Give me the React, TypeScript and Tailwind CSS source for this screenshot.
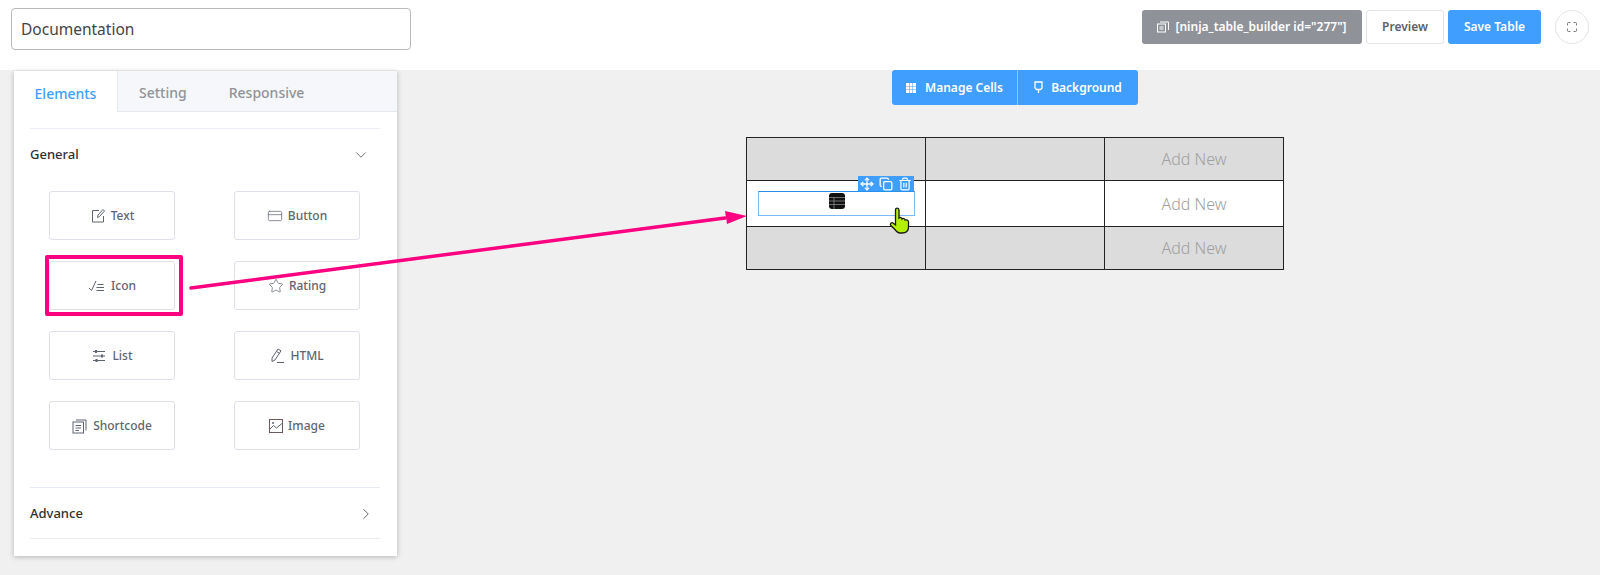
import type { ReactNode } from "react";
import { ChevronDown, ChevronRight, Copy, Move, Star, Trash2, CreditCard, Maximize } from "lucide-react";

function Glyph({ children, w = 16, h = 16 }: { children: ReactNode; w?: number; h?: number }) {
  return (
    <svg width={w} height={h} viewBox={`0 0 ${w} ${h}`} fill="none" stroke="currentColor" strokeWidth="1">
      {children}
    </svg>
  );
}

const elements: { label: string; icon: ReactNode; marked?: boolean }[] = [
  {
    label: "Text",
    icon: (
      <Glyph>
        <path d="M9 2.500H2.500v11.500h11V8" />
        <path d="M7.500 9.500l.5-2.500 5-5.500 1.500 1.500-5 5.500z" />
      </Glyph>
    ),
  },
  { label: "Button", icon: <CreditCard size={16} strokeWidth={1.1} /> },
  {
    label: "Icon",
    icon: (
      <Glyph w={18}>
        <path d="M1 10l2.500 2.500L8 3" />
        <path d="M9.500 6.500h6M8.500 9.500h7.500M8.500 12.500h7.500" />
      </Glyph>
    ),
    marked: true,
  },
  { label: "Rating", icon: <Star size={16} strokeWidth={1.1} /> },
  {
    label: "List",
    icon: (
      <Glyph>
        <path d="M2 3.500h12M2 8h12M2 12.500h12" />
        <path d="M5 2v3M11 6.500v3M5.500 11v3" strokeWidth="2" />
      </Glyph>
    ),
  },
  {
    label: "HTML",
    icon: (
      <Glyph w={15} h={17}>
        <path d="M2 11l6-9 3 1.800-6 9.200-3 1.500z" />
        <path d="M6.500 4.500l3 1.800M7 15.500h7" />
      </Glyph>
    ),
  },
  {
    label: "Shortcode",
    icon: (
      <Glyph>
        <rect x="1" y="4" width="10.500" height="11" />
        <path d="M4 2h10v10.500M3.500 7.500h5.500M3.500 10h5.500M3.500 12.500h3.500" />
      </Glyph>
    ),
  },
  {
    label: "Image",
    icon: (
      <Glyph w={14} h={14}>
        <rect x="0.500" y="0.500" width="13" height="13" stroke="#6b5a5a" />
        <path d="M.5 10.500l4-4 3 2.500 6-5" />
        <circle cx="4" cy="4" r="1" fill="currentColor" stroke="none" />
      </Glyph>
    ),
  },
];

function ElementButton({ label, icon, marked }: { label: string; icon: ReactNode; marked?: boolean }) {
  return (
    <div className="relative flex h-[49px] w-[126px] items-center justify-center gap-[5px] rounded-[3px] border border-[#dfe1ea] bg-white text-[12px] font-medium text-[#5f6570]">
      {icon}
      <span>{label}</span>
      {marked && <div className="absolute -left-[5px] -top-[7px] h-[61px] w-[138px] rounded-[2px] border-4 border-[#fb0080]" />}
    </div>
  );
}

function Cell({ shaded, text, children }: { shaded?: boolean; text?: string; children?: ReactNode }) {
  return (
    <td className={`relative border border-[#222] p-0 text-center text-[16px] font-light text-[#a0a0a0] ${shaded ? "bg-[#dcdcdc]" : "bg-white"}`}>
      {text}
      {children}
    </td>
  );
}

export default function App() {
  return (
    <div className="relative h-[575px] w-[1600px] overflow-hidden bg-[#f0f0f0] font-['Noto_Sans',sans-serif]">
      <header className="flex h-[70px] items-start bg-white pl-[11px] pr-[11px] pt-[8px]">
        <div className="flex h-[42px] w-[400px] items-center rounded-[4px] border border-[#b9b9b9] pl-[9px] pt-[2px] text-[15.5px] text-[#444]">
          Documentation
        </div>
        <div className="ml-auto mt-[2px] flex items-center text-[12px] font-semibold">
          <div className="flex h-[34px] w-[220px] items-center justify-center gap-[6px] rounded-[3px] bg-[#8f9298] text-white">
            <Glyph w={12} h={12}>
              <rect x="0.500" y="3" width="8" height="8" />
              <path d="M3 1h8.500v8M2.500 6h4M2.500 8h4" />
            </Glyph>
            <span>[ninja_table_builder id="277"]</span>
          </div>
          <div className="ml-[4px] flex h-[34px] w-[78px] items-center justify-center rounded-[3px] border border-[#e2e4ea] bg-white text-[#606266]">Preview</div>
          <div className="ml-[4px] flex h-[34px] w-[93px] items-center justify-center rounded-[3px] bg-[#409eff] text-white">Save Table</div>
          <div className="ml-[14px] flex h-[34px] w-[34px] items-center justify-center rounded-full border border-[#e2e4ea] text-[#777]">
            <Maximize size={12} />
          </div>
        </div>
      </header>

      <main className="flex items-start">
        <aside className="ml-[14px] mt-px h-[485px] w-[383px] bg-white shadow-[0_1px_5px_rgba(0,0,0,0.25)]">
          <div className="flex h-[41px] border-b border-[#e4e7ed] bg-[#f5f7fa] pt-0 text-[14px] font-medium text-[#909399]">
            <div className="-mb-px flex w-[104px] items-center justify-center border-r border-[#e4e7ed] bg-white pt-[3px] text-[#409eff]">Elements</div>
            <div className="flex items-center pl-[21px] pt-[3px]">Setting</div>
            <div className="flex items-center pl-[42px] pt-[3px]">Responsive</div>
          </div>
          <div className="ml-[16px] mr-[17px] mt-[16px] border-t border-[#ebeef5]">
            <div className="flex h-[50px] items-center justify-between pr-[10px] pt-[2px] text-[13px] font-medium text-[#303133]">
              General
              <ChevronDown size={18} strokeWidth={0.9} />
            </div>
            <div className="ml-[19px] mt-[12px] grid w-[311px] grid-cols-2 gap-x-[59px] gap-y-[21px]">
              {elements.map((el) => (
                <ElementButton key={el.label} {...el} />
              ))}
            </div>
            <div className="mt-[37px] flex h-[52px] items-center justify-between border-y border-[#e6eaf3] pr-[5px] pt-[2px] text-[13px] font-medium text-[#303133]">
              Advance
              <ChevronRight size={18} strokeWidth={1} />
            </div>
          </div>
        </aside>

        <section className="ml-[349px] flex w-[538px] flex-col items-center">
          <div className="flex h-[35px] w-[246px] rounded-[3px] bg-[#409eff] text-[12px] font-semibold text-white">
            <div className="flex w-[126px] items-center justify-center gap-[9px] border-r border-[#8cc5ff]">
              <svg width="10" height="10" viewBox="0 0 10 10" fill="currentColor">
                <path d="M0 0h3v3H0zM3.500 0h3v3h-3zM7 0h3v3H7zM0 3.500h3v3H0zM3.500 3.500h3v3h-3zM7 3.500h3v3H7zM0 7h3v3H0zM3.500 7h3v3h-3zM7 7h3v3H7z" />
              </svg>
              Manage Cells
            </div>
            <div className="flex flex-1 items-center justify-center gap-[8px]">
              <svg width="9" height="13" viewBox="0 0 9 13" fill="none" stroke="currentColor" strokeWidth="1.300">
                <path d="M1 1h7v6l-1.500 1.500h-4L1 7z" />
                <path d="M4.500 9v3" />
              </svg>
              Background
            </div>
          </div>
          <table className="mt-[32px] h-[132px] w-[538px] table-fixed border-collapse">
            <tbody>
              <tr className="h-[43px]">
                <Cell shaded />
                <Cell shaded />
                <Cell shaded text="Add New" />
              </tr>
              <tr className="h-[46px]">
                <Cell>
                  <div className="ml-[11px] flex h-[25px] w-[157px] justify-center border border-[#7db8f7] border-t-[#2a8fe8] pt-px text-black">
                    <svg width="16" height="16" viewBox="0 0 16 16">
                      <rect width="16" height="16" rx="3" fill="#111" />
                      <path d="M0 4.500h16M0 8h16M0 11.500h16M5 4v12" stroke="#888" strokeWidth="0.8" />
                    </svg>
                  </div>
                  <div className="absolute left-[111px] top-[-5px] flex h-[15px] w-[56px] items-center justify-around bg-[#409eff] text-white">
                    <Move size={14} strokeWidth={2.200} />
                    <Copy size={14} strokeWidth={2.200} />
                    <Trash2 size={14} strokeWidth={2} />
                  </div>
                </Cell>
                <Cell />
                <Cell text="Add New" />
              </tr>
              <tr className="h-[43px]">
                <Cell shaded />
                <Cell shaded />
                <Cell shaded text="Add New" />
              </tr>
            </tbody>
          </table>
        </section>
      </main>

      <svg className="pointer-events-none absolute left-0 top-0" width="1600" height="575">
        <line x1="191" y1="288" x2="725" y2="218" stroke="#fb0080" strokeWidth="3.500" strokeLinecap="round" />
        <polygon points="747,216 725,211 727,224" fill="#fb0080" />
        <path
          transform="translate(890 208)"
          d="M5.500 2C5.500-.5 9-.5 9 2V10C10 9 12 9.500 12 11C13 10 15 10.500 15 12C16.500 11.500 18.500 12 18.500 14V19C18.500 23 16 25 12 25H10C7.500 25 6 23 4.500 21L.8 17.500C-.5 16 1.500 14 3 15L5.500 17Z"
          fill="#b4f000"
          stroke="#1a1a1a"
          strokeWidth="1.300"
        />
      </svg>
    </div>
  );
}
